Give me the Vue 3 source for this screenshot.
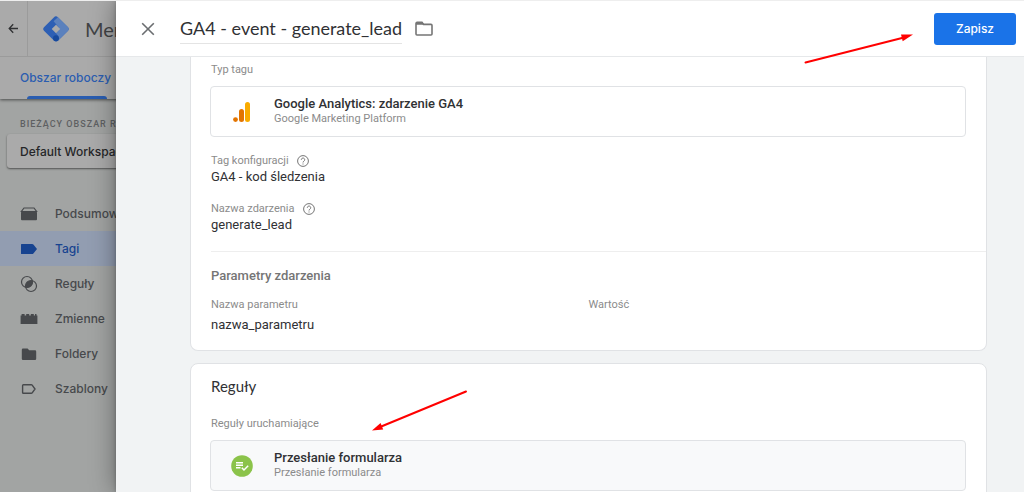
<script setup>
import { ref } from 'vue'

const tagName = ref('GA4 - event - generate_lead')
const nav = [
  { id: 'overview', label: 'Podsumowanie' },
  { id: 'tags', label: 'Tagi', active: true },
  { id: 'triggers', label: 'Reguły' },
  { id: 'variables', label: 'Zmienne' },
  { id: 'folders', label: 'Foldery' },
  { id: 'templates', label: 'Szablony' },
]
const fields = [
  { label: 'Tag konfiguracji', value: 'GA4 - kod śledzenia' },
  { label: 'Nazwa zdarzenia', value: 'generate_lead' },
]
</script>

<template>
  <div class="page">
    <div class="workspace">
      <header class="top">
        <div class="brand-row">
          <button class="back" aria-label="Wstecz">
            <svg width="11" height="11" viewBox="0 0 11 11"><path d="M10 5.500H1.500M5.200 1.200 1.200 5.500l4 4.300" fill="none" stroke="#303133" stroke-width="1.300" /></svg>
          </button>
          <svg class="logo" width="26" height="26" viewBox="0 0 26 26">
            <path d="M10.800 1.400a3 3 0 0 1 4.300 0l9.700 9.700a2.700 2.700 0 0 1 0 3.900L15.200 24.500a3 3 0 0 1-4.300 0L1.200 15a2.700 2.700 0 0 1 0-3.900z" fill="#2d5fb4" />
            <path d="M10.600 5.200 14.900 1.200l9.900 9.900a2.700 2.700 0 0 1 0 3.900L15.400 24.200l-.2-4.200-2.200-2.800L17.200 13z" fill="#5b81bd" />
            <path d="M13 8.700 17.300 13 13 17.300 8.700 13z" fill="#aaa" />
            <circle cx="13" cy="22.300" r="3" fill="#17499c" />
          </svg>
          <span class="brand">Menedżer tagów</span>
        </div>
        <nav class="tabs"><a href="#workspace" class="tab">Obszar roboczy</a></nav>
      </header>
      <aside class="side">
        <div class="side-label">BIEŻĄCY OBSZAR ROBOCZY</div>
        <button class="picker">Default Workspace</button>
        <nav class="nav">
          <a v-for="item in nav" :key="item.id" :href="'#' + item.id" class="nav-item" :class="{ active: item.active }">
            <svg width="18" height="18" viewBox="0 0 18 18" fill="currentColor">
              <template v-if="item.id === 'overview'">
                <path d="M4 3h10l2.600 3.500H1.400z" fill="none" stroke="currentColor" stroke-width="1.200" />
                <rect x="1" y="6.600" width="16" height="8.600" rx="1" />
              </template>
              <path v-else-if="item.id === 'tags'" d="M1.600 4h10.600a1.500 1.500 0 0 1 1.200.6L17 9l-3.600 4.400a1.500 1.500 0 0 1-1.200.6H1.600A.6.6 0 0 1 1 13.400V4.600a.6.6 0 0 1 .6-.6z" />
              <template v-else-if="item.id === 'triggers'">
                <circle cx="7" cy="7" r="5.500" fill="none" stroke="currentColor" stroke-width="1.200" />
                <circle cx="11" cy="11" r="5.500" fill="none" stroke="currentColor" stroke-width="1.200" />
                <path d="M12.500 5.700a5.500 5.500 0 0 0-6.800 6.800 5.500 5.500 0 0 0 6.800-6.800z" />
              </template>
              <path v-else-if="item.id === 'variables'" d="M.6 5.500h1V4h3v1.500h1.600V4h3v1.500h1.600V4h3v1.500h1.200V4h1.500v1.500h.9V14H.6z" />
              <path v-else-if="item.id === 'folders'" d="M3 3.500h4.600l1.600 1.700H15A1.200 1.200 0 0 1 16.200 6.400v7.400A1.200 1.200 0 0 1 15 15H3a1.200 1.200 0 0 1-1.200-1.200V4.700A1.200 1.200 0 0 1 3 3.500z" />
              <path v-else d="M3.400 4.700h7.800a1.200 1.200 0 0 1 1 .5L15 9l-2.800 3.800a1.200 1.200 0 0 1-1 .5H3.400a.8.8 0 0 1-.8-.8v-7a.8.8 0 0 1 .8-.8z" fill="none" stroke="currentColor" stroke-width="1.400" />
            </svg>
            <span>{{ item.label }}</span>
          </a>
        </nav>
      </aside>
    </div>

    <main class="drawer">
      <header class="bar">
        <button class="icon-btn" aria-label="Zamknij">
          <svg width="14" height="14" viewBox="0 0 14 14"><path d="M1.200 1.200 12.800 12.800M12.800 1.200 1.200 12.800" stroke="#6a6d70" stroke-width="1.600" /></svg>
        </button>
        <input v-model="tagName" class="title" aria-label="Nazwa tagu" />
        <button class="icon-btn folder" aria-label="Folder">
          <svg width="18" height="16" viewBox="0 0 18 16"><path d="M1 2.400a1 1 0 0 1 1-1h5l1.600 2H16a1 1 0 0 1 1 1V13a1 1 0 0 1-1 1H2a1 1 0 0 1-1-1z" fill="none" stroke="#757575" stroke-width="1.600" /><path d="M1 1h6.400l2 2.800H1z" fill="#757575" /></svg>
        </button>
        <button class="save">Zapisz</button>
      </header>

      <div class="content">
        <section class="card config">
          <div class="label">Typ tagu</div>
          <button class="choice">
            <svg class="choice-icon" width="22" height="22" viewBox="0 0 22 22">
              <rect x="14" y="1" width="5" height="20" rx="2.500" fill="#f9ab00" />
              <rect x="8" y="8" width="5" height="13" rx="2.500" fill="#e37400" />
              <circle cx="4.500" cy="18.600" r="2.400" fill="#e37400" />
            </svg>
            <span class="choice-text">
              <span class="choice-title">Google Analytics: zdarzenie GA4</span>
              <span class="choice-sub">Google Marketing Platform</span>
            </span>
          </button>
          <div v-for="field in fields" :key="field.label" class="field">
            <div class="label">
              {{ field.label }}
              <svg width="12" height="12" viewBox="0 0 12 12" fill="none" stroke="#757575"><circle cx="6" cy="6" r="5.400" /><path d="M4.300 4.800a1.700 1.700 0 1 1 2.700 1.300C6.300 6.600 6 6.900 6 7.500M6 8.500v1" /></svg>
            </div>
            <div class="value">{{ field.value }}</div>
          </div>
          <div class="params">
            <h3>Parametry zdarzenia</h3>
            <div class="columns">
              <div>
                <div class="label">Nazwa parametru</div>
                <div class="value param">nazwa_parametru</div>
              </div>
              <div class="label">Wartość</div>
            </div>
          </div>
        </section>

        <section class="card rules">
          <h2>Reguły</h2>
          <div class="label">Reguły uruchamiające</div>
          <button class="choice tinted">
            <svg class="choice-icon" width="22" height="22" viewBox="0 0 22 22">
              <circle cx="11" cy="11" r="10.800" fill="#8bc34a" />
              <path d="M5 7.800h7M5 10.300h7M5 12.800h4.500M10.800 12.800l2.200 2.200 4.200-4.200" fill="none" stroke="#fff" stroke-width="1.500" />
            </svg>
            <span class="choice-text">
              <span class="choice-title">Przesłanie formularza</span>
              <span class="choice-sub">Przesłanie formularza</span>
            </span>
          </button>
        </section>
      </div>

      <svg class="arrow to-save" width="110" height="32" viewBox="0 0 110 32">
        <path d="M1.500 29.500 100 4.500" stroke="#f00" stroke-width="2" stroke-linecap="round" />
        <path d="M109 1.600 98.700 8.300 97 1.400z" fill="#f00" />
      </svg>
      <svg class="arrow to-rule" width="97" height="42" viewBox="0 0 97 42">
        <path d="M95 1.500 9 37" stroke="#f00" stroke-width="2" stroke-linecap="round" />
        <path d="M1 40.500 9.600 33l2.600 6.500z" fill="#f00" />
      </svg>
    </main>
  </div>
</template>

<style>
body { overflow: hidden; }
</style>

<style scoped>
.page {
  position: relative;
  height: 100vh;
  overflow: hidden;
  background: #a2a4a3;
  border-top: 1px solid #eee;
  box-sizing: border-box;
  font-family: Roboto, "Liberation Sans", sans-serif;
  font-size: 13px;
}
.page *, .page *::before, .page *::after { box-sizing: border-box; }
button { border: 0; padding: 0; background: none; font: inherit; color: inherit; text-align: left; cursor: pointer; }
h2, h3 { margin: 0; }
a { text-decoration: none; color: inherit; }
svg { display: block; flex: none; }

.workspace { width: 256px; font-family: Lato, sans-serif; }
.top { background: #aaa; box-shadow: 0 1px 3px #0000008c; position: relative; }
.brand-row { display: flex; align-items: center; height: 56px; border-bottom: 1px solid #9b9b9b; }
.back { width: 28px; height: 56px; padding-left: 8px; border-right: 1px solid #9b9b9b; }
.logo { margin: 0 16px 0 15px; }
.brand { font-size: 20px; color: #414345; white-space: nowrap; }
.tabs { height: 42px; padding-left: 20px; display: flex; }
.tab {
  position: relative;
  line-height: 42px;
  font-family: Inter, sans-serif;
  font-size: 12px;
  font-weight: 500;
  color: #2a5db0;
}
.tab::after {
  content: "";
  position: absolute;
  left: 7px;
  right: 4px;
  bottom: 0;
  height: 3px;
  border-radius: 3px 3px 0 0;
  background: #2a5db0;
}
.side { padding-top: 17px; font-family: Inter, sans-serif; }
.side-label { padding-left: 20px; line-height: 16px; font-family: Roboto, sans-serif; font-size: 9px; font-weight: 500; letter-spacing: 1px; color: #5e6062; }
.picker {
  display: block;
  width: 240px;
  height: 34px;
  margin: 2px 0 0 7px;
  padding-left: 13px;
  border-radius: 3px;
  background: #aaa;
  box-shadow: 0 1px 2px #00000080;
  font-size: 12px;
  font-weight: 500;
  color: #252628;
}
.nav { margin-top: 28px; }
.nav-item {
  display: flex;
  align-items: center;
  gap: 17px;
  height: 35px;
  padding-left: 20px;
  font-size: 12px;
  font-weight: 500;
  color: #47494c;
}
.nav-item.active { background: #929db1; color: #174390; }

.drawer {
  position: absolute;
  inset: 0 0 0 116px;
  display: flex;
  flex-direction: column;
  background: #f1f3f4;
  box-shadow: 0 0 24px #00000066, 0 0 4px #00000040;
}
.bar {
  display: flex;
  align-items: center;
  flex: none;
  height: 56px;
  padding: 0 8px 0 25px;
  background: #fff;
  border-bottom: 1px solid #e6e8ea;
}
.title {
  field-sizing: content;
  height: 30px;
  margin-left: 25px;
  padding: 0;
  border: 0;
  border-bottom: 1px solid #e4e4e4;
  background: none;
  outline: 0;
  font-family: Lato, sans-serif;
  font-size: 18px;
  color: #303134;
}
.folder { margin-left: 13px; }
.save {
  width: 82px;
  height: 32px;
  margin-left: auto;
  border-radius: 3px;
  background: #1a73e8;
  color: #fff;
  font-family: Inter, sans-serif;
  font-size: 12px;
  font-weight: 500;
  text-align: center;
}
.content { flex: 1; min-height: 0; overflow: hidden; padding: 0 37px 0 74px; }
.card { border: 1px solid #e0e2e5; border-radius: 8px; background: #fff; padding: 0 20px; }
.config { border-top: 0; border-radius: 0 0 8px 8px; padding-top: 5px; padding-bottom: 17px; }
.label { display: flex; align-items: center; gap: 8px; line-height: 16px; font-size: 11px; color: #8b8b8b; }
.value { line-height: 16px; color: #303134; }
.choice {
  display: flex;
  align-items: center;
  width: calc(100% + 1px);
  height: 51px;
  margin: 8px 0 0 -1px;
  border: 1px solid #e0e2e5;
  border-radius: 4px;
  background: #fff;
}
.choice-icon { margin: 0 21px 0 20px; }
.choice-text { display: flex; flex-direction: column; padding-bottom: 2px; line-height: 15px; }
.choice-title { font-weight: 500; color: #303134; }
.choice-sub { font-size: 11px; color: #8b8b8b; }
.tinted { background: #f8f9fa; }
.field { margin-top: 16px; }
.params { margin: 18px -20px 0 0; padding-top: 16px; border-top: 1px solid #eee; }
.params h3 { line-height: 16px; font-size: 13px; font-weight: 500; color: #757575; }
.columns { display: grid; grid-template-columns: 1fr 1fr; align-items: start; margin: 13px 20px 0 0; }
.param { margin-top: 4px; }
.rules { margin-top: 12px; padding-top: 10px; padding-bottom: 24px; }
.rules h2 { margin-bottom: 18px; line-height: 24px; font-family: Lato, sans-serif; font-size: 15px; font-weight: 400; color: #303134; }
.arrow { position: absolute; pointer-events: none; }
.to-save { right: 110px; top: 32px; }
.to-rule { left: 255px; top: 389px; }
</style>
